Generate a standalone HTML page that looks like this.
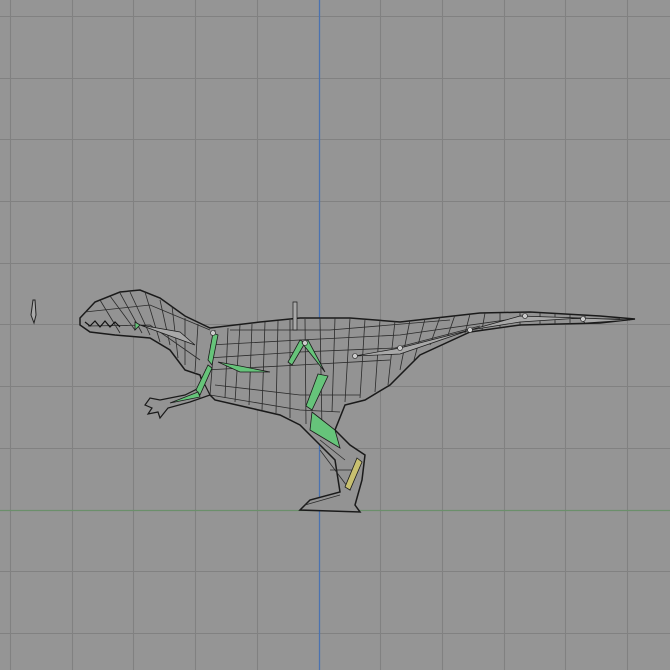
<!DOCTYPE html>
<html><head><style>html,body{margin:0;padding:0;background:#949494;width:670px;height:670px;overflow:hidden}</style></head>
<body>
<svg width="670" height="670" viewBox="0 0 670 670" xmlns="http://www.w3.org/2000/svg">
<rect width="670" height="670" fill="#959595"/>
<g stroke="#818181" stroke-width="1.1">
<line x1="10.5" y1="0" x2="10.5" y2="670"/><line x1="72.5" y1="0" x2="72.5" y2="670"/><line x1="133.5" y1="0" x2="133.5" y2="670"/><line x1="195.5" y1="0" x2="195.5" y2="670"/><line x1="257.5" y1="0" x2="257.5" y2="670"/><line x1="380.5" y1="0" x2="380.5" y2="670"/><line x1="442.5" y1="0" x2="442.5" y2="670"/><line x1="504.5" y1="0" x2="504.5" y2="670"/><line x1="565.5" y1="0" x2="565.5" y2="670"/><line x1="627.5" y1="0" x2="627.5" y2="670"/>
<line y1="16.5" x1="0" y2="16.5" x2="670"/><line y1="78.5" x1="0" y2="78.5" x2="670"/><line y1="139.5" x1="0" y2="139.5" x2="670"/><line y1="201.5" x1="0" y2="201.5" x2="670"/><line y1="263.5" x1="0" y2="263.5" x2="670"/><line y1="324.5" x1="0" y2="324.5" x2="670"/><line y1="386.5" x1="0" y2="386.5" x2="670"/><line y1="448.5" x1="0" y2="448.5" x2="670"/><line y1="571.5" x1="0" y2="571.5" x2="670"/><line y1="633.5" x1="0" y2="633.5" x2="670"/>
</g>
<line x1="0" y1="510.5" x2="670" y2="510.5" stroke="#6b8f6b" stroke-width="1.2"/>
<line x1="319.5" y1="0" x2="319.5" y2="670" stroke="#4a72b0" stroke-width="1.3"/>
<path d="M33,300 L35,300 L36,315 L34,323 L31,315 Z" fill="#aaa" stroke="#222" stroke-width="1"/>
<path d="M80,318 L95,302 L120,292 L140,290 L160,298 L185,316 L210,328 L260,322 L300,318 L350,318 L400,322 L480,313 L530,312 L600,316 L635,319 L600,323 L520,325 L470,332 L420,355 L390,385 L365,400 L345,405 L335,430 L350,445 L365,455 L362,480 L355,505 L360,512 L300,510 L310,500 L340,492 L335,460 L315,440 L300,425 L280,415 L250,408 L215,400 L205,390 L200,375 L185,370 L170,350 L150,338 L115,335 L90,332 L80,325 Z" fill="#939393" stroke="#1a1a1a" stroke-width="1.5"/>
<g stroke="#2a2a2a" stroke-width="0.8" fill="none">
<path d="M85,312 L150,305 L210,330 M88,326 L150,325 L200,360 M100,300 L120,333 M110,296 L135,330 M120,293 L142,333 M130,292 L150,335 M145,292 L160,342 M160,300 L170,345 M172,306 L178,358 M185,318 L185,365 M198,324 L195,372 M215,330 L210,395 M228,328 L225,398 M240,325 L235,402 M252,324 L249,405 M265,322 L262,410 M278,321 L276,413 M290,320 L290,418 M305,319 L306,424 M320,318 L322,430 M335,318 L332,412 M350,318 L345,402 M365,319 L360,398 M380,320 L375,392 M395,321 L388,385 M410,320 L400,370 M425,319 L414,360 M440,317 L430,345 M455,315 L447,338 M470,314 L465,333 M485,313 L482,330 M500,313 L500,328 M520,312 L520,326 M540,313 L540,325 M555,314 L555,324 M570,315 L570,324 M585,316 L585,323"/>
<path d="M210,345 L300,340 L400,335 L520,318 L620,319 M205,370 L300,365 L390,360 M215,385 L300,395 L360,395 M230,330 L330,330 L450,320 M208,358 L300,352 L395,348 L480,326 M210,395 L300,410 L340,412 M320,440 L345,460 M330,470 L358,470"/>
<path d="M305,505 L340,495 M320,450 L350,490 L360,460"/>
</g>
<path d="M85,322 L90,326 L95,321 L100,327 L105,321 L110,327 L115,322 L120,327" stroke="#111" fill="none" stroke-width="1.2"/>
<path d="M205,385 L185,395 L160,400 L150,398 L145,405 L152,408 L148,414 L158,412 L160,418 L168,408 L190,402 L210,395 Z" fill="#939393" stroke="#1a1a1a" stroke-width="1.2"/>
<g fill="#66c47a" stroke="#1a1a1a" stroke-width="0.8">
<path d="M213,333 L218,335 L212,365 L208,360 Z"/>
<path d="M208,365 L212,368 L200,395 L196,390 Z"/>
<path d="M198,392 L200,397 L170,403 Z"/>
<path d="M218,362 L240,366 L270,372 L240,372 Z"/>
<path d="M300,340 L305,343 L292,365 L288,362 Z"/>
<path d="M302,343 L308,340 L325,372 Z"/>
<path d="M318,374 L328,376 L312,410 L306,406 Z"/>
<path d="M312,412 L335,430 L340,448 L310,430 Z"/>
<path d="M135,322 L140,325 L135,330 Z"/>
</g>
<path d="M357,458 L362,462 L350,490 L345,487 Z" fill="#c8c070" stroke="#1a1a1a" stroke-width="0.8"/>
<g fill="#a8a8a8" stroke="#1a1a1a" stroke-width="0.7">
<path d="M293,302 L297,302 L297,330 L293,330 Z"/>
<path d="M355,356 L400,348 L470,330 L400,354 Z"/>
<path d="M470,330 L520,316 L580,318 L520,322 Z"/>
<path d="M580,318 L630,320 L585,323 Z"/>
<path d="M140,325 L180,332 L195,345 Z"/>
</g>
<g fill="#ccc" stroke="#222" stroke-width="0.6">
<circle cx="355" cy="356" r="2.5"/><circle cx="400" cy="348" r="2.5"/><circle cx="470" cy="330" r="2.5"/><circle cx="525" cy="316" r="2.5"/><circle cx="583" cy="319" r="2.5"/><circle cx="305" cy="343" r="2.5"/><circle cx="213" cy="333" r="2.5"/>
</g>
</svg>
</body></html>
